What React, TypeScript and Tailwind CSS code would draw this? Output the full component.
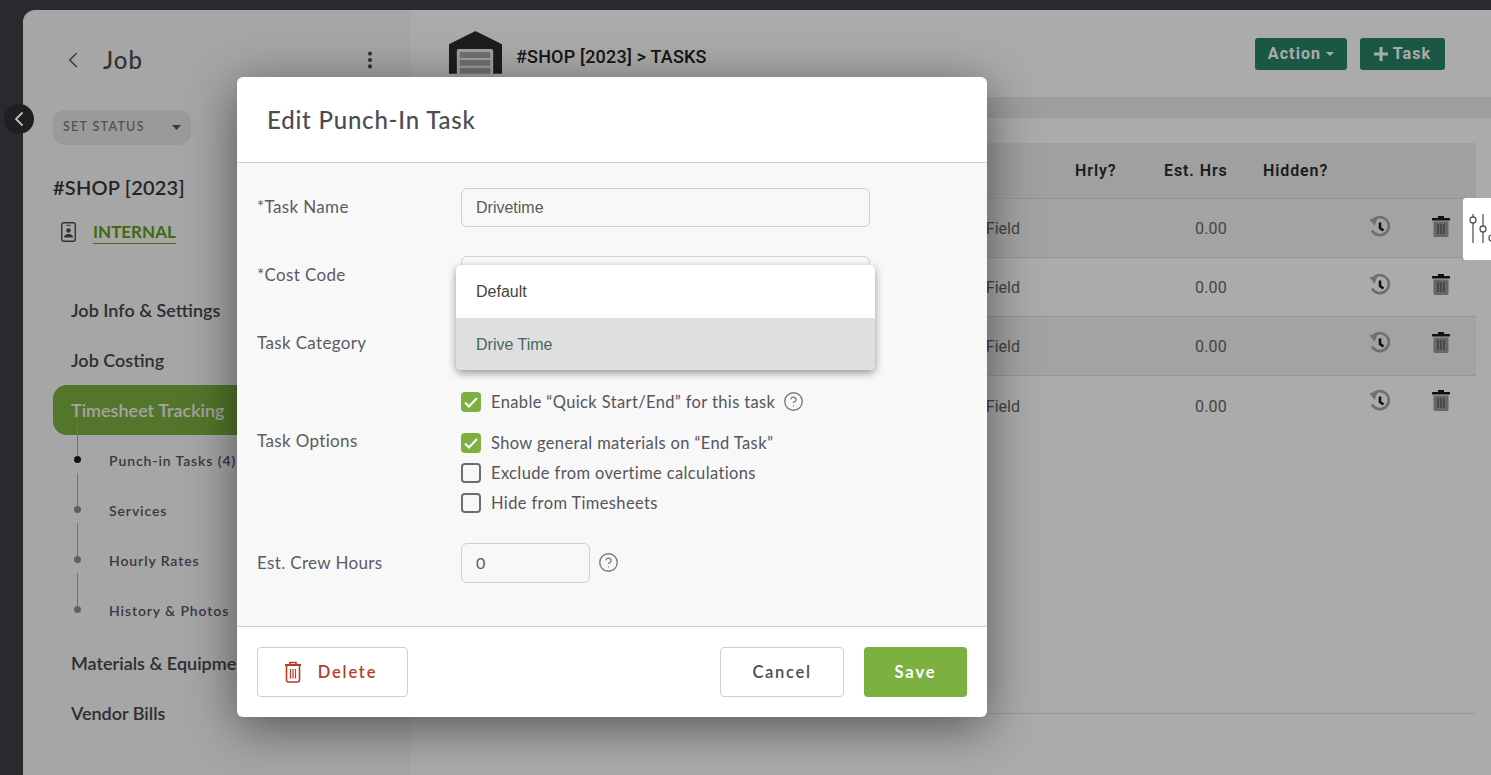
import React from "react";
import { ChevronLeft, EllipsisVertical, CircleHelp } from "lucide-react";

const Sans = "font-['Lato','Open_Sans',sans-serif]";
const Rob = "font-['Roboto',sans-serif]";
const Lib = "font-['Liberation_Sans',sans-serif]";

function HistoryIcon() {
  return (
    <svg width="24" height="24" viewBox="0 0 24 24" fill="none">
      <path d="M4.200 6.400A9 9 0 1 1 4 15.500" stroke="#a6a6a6" strokeWidth="2.600" />
      <path d="M1.500 4 L9.500 3.500 L6.500 11 Z" fill="#a6a6a6" />
      <path d="M12 7.500 V13 L15.500 15.500" stroke="#1c1c1c" strokeWidth="2.600" />
    </svg>
  );
}

function TrashIcon() {
  return (
    <svg width="20" height="22" viewBox="0 0 20 22">
      <rect x="7" y="0" width="6" height="2" fill="#1a1a1a" />
      <rect x="1" y="2" width="18" height="2.400" rx="0.500" fill="#1a1a1a" />
      <path d="M2.500 5.500 H17.500 V19.500 A1.500 1.500 0 0 1 16 21 H4 A1.500 1.500 0 0 1 2.500 19.500 Z" fill="#9a9a9a" />
      <path d="M7 8 V18 M10 8 V18 M13 8 V18" stroke="#444" strokeWidth="1" />
    </svg>
  );
}

function DeleteTrash() {
  return (
    <svg width="18" height="22" viewBox="0 0 18 22" fill="none" stroke="#b93a26" strokeWidth="1.600">
      <path d="M6 3 V1.500 H12 V3" />
      <path d="M1 4 H17" strokeWidth="2" />
      <path d="M2.500 4 V19 A2 2 0 0 0 4.500 21 H13.500 A2 2 0 0 0 15.500 19 V4" />
      <path d="M6.500 8 V17.500 M9 8 V17.500 M11.500 8 V17.500" strokeWidth="1.200" />
    </svg>
  );
}

function Garage() {
  return (
    <svg width="55" height="50" viewBox="0 0 56 50" className="shrink-0">
      <path d="M1 14 L27 1 Q28 0.500 29 1 L55 14 V44 H1 Z" fill="#2c2c2c" />
      <rect x="9" y="19" width="37" height="31" rx="2" fill="#f2f2f2" />
      <rect x="12" y="22" width="31" height="6" fill="#a9a9a9" />
      <rect x="12" y="30" width="31" height="6" fill="#a9a9a9" />
      <rect x="12" y="38" width="31" height="6" fill="#a9a9a9" />
    </svg>
  );
}

function Badge() {
  return (
    <svg width="15" height="20" viewBox="0 0 15 20" fill="none" className="shrink-0">
      <rect x="0.700" y="0.700" width="13.600" height="18.600" rx="2" stroke="#4b4b50" strokeWidth="1.400" />
      <rect x="5.500" y="2.800" width="4" height="1" fill="#4b4b50" />
      <circle cx="7.500" cy="8.500" r="2.200" fill="#4b4b50" />
      <path d="M3 15.500 Q3 12 7.500 12 Q12 12 12 15.500 Z" fill="#4b4b50" />
    </svg>
  );
}

function Sliders() {
  return (
    <svg width="28" height="34" viewBox="0 0 28 34" fill="none" stroke="#555" strokeWidth="1.300" className="shrink-0">
      <path d="M10 2 V31 M20 2 V31 M29 5 V31" />
      <circle cx="10" cy="8" r="3" fill="#fff" />
      <circle cx="20" cy="17" r="3" fill="#fff" />
      <circle cx="29" cy="26" r="3" fill="#fff" />
    </svg>
  );
}

function NavItem({ label }: { label: string }) {
  return (
    <div className="flex h-[50px] items-center pl-[18px] text-[18px] font-semibold whitespace-nowrap text-[#45454d]">
      {label}
    </div>
  );
}

function SubItem({ label, active }: { label: string; active?: boolean }) {
  return (
    <div className="flex h-[50px] items-center">
      <div className="ml-[20px] flex h-full w-[9px] shrink-0 flex-col items-center">
        <div className="-mt-[12px] h-[33px] w-px shrink-0 bg-[#a8a8a8]" />
        <div className={`h-[7px] w-[7px] shrink-0 rounded-full ${active ? "bg-[#1a1a1a]" : "bg-[#8f8f8f]"}`} />
      </div>
      <span className="ml-[27px] text-[14px] font-semibold tracking-[0.9px] whitespace-nowrap text-[#55555c]">{label}</span>
    </div>
  );
}

function Row({ shaded, last, iconShift }: { shaded?: boolean; last?: boolean; iconShift: string }) {
  return (
    <div className={`flex h-[59px] items-center pt-[2px] ${last ? "" : "border-b border-[#dedede]"} ${shaded ? "bg-[#f3f3f3]" : "bg-white"}`}>
      <div className={`flex-1 text-right text-[16px] text-[#666] ${Rob}`}>Field</div>
      <div className="w-[144px]" />
      <div className={`w-[63px] text-right text-[16px] tracking-[0.2px] text-[#666] ${Rob}`}>0.00</div>
      <div className={`flex w-[179px] justify-end pr-[14px] ${iconShift}`}><HistoryIcon /></div>
      <div className={`flex w-[70px] justify-center ${iconShift}`}><TrashIcon /></div>
    </div>
  );
}

function Check({ checked, label, help }: { checked?: boolean; label: string; help?: boolean }) {
  return (
    <div className="flex h-[30px] items-center">
      {checked ? (
        <div className="flex h-[20px] w-[20px] items-center justify-center rounded-[4px] bg-[#7cb041]">
          <svg width="14" height="11" viewBox="0 0 14 11" fill="none" stroke="#fff" strokeWidth="2">
            <path d="M1 5.500 L5 9.500 L13 1" />
          </svg>
        </div>
      ) : (
        <div className="h-[20px] w-[20px] rounded-[4px] border-2 border-[#6d6d76]" />
      )}
      <span className="ml-[10px] text-[16.500px] tracking-[0.37px] whitespace-nowrap text-[#55555c]">{label}</span>
      {help && <CircleHelp size={21} strokeWidth={1.500} className="-mt-[2px] ml-[8px] text-[#77777c]" />}
    </div>
  );
}

function Field({ label, children, h = "h-[68px]" }: { label: string; children?: React.ReactNode; h?: string }) {
  return (
    <div className={`flex ${h}`}>
      <div className="w-[204px] pt-[7px] text-[17px] leading-[24px] tracking-[0.35px] text-[#5b5b62]">{label}</div>
      <div className="flex-1">{children}</div>
    </div>
  );
}

const inputCls = `h-[39px] rounded-[6px] border border-[#cfcfcf] bg-[#f8f8f8] pl-[14px] flex items-center text-[16px] text-[#5a5a60]`;

export default function App() {
  return (
    <div className={`relative h-[775px] w-[1491px] overflow-hidden bg-[#3f3f45] pt-[10px] pl-[23px] ${Sans}`}>
      <div className="flex h-[765px] overflow-hidden rounded-tl-[12px]">
        {/* sidebar */}
        <aside className="w-[388px] shrink-0 bg-[#f8f8f8] pt-[30px]">
          <div className="flex h-[40px] items-center pl-[37px]">
            <ChevronLeft size={26} strokeWidth={1.500} className="text-[#5c5c62]" />
            <span className="ml-[17px] text-[24px] font-medium tracking-[1px] text-[#4a4a52]">Job</span>
            <EllipsisVertical size={22} strokeWidth={2.500} className="ml-[216px] text-[#4a4a52]" />
          </div>
          <div className="mt-[30px] ml-[30px] flex h-[35px] w-[138px] items-center rounded-[12px] bg-[#e6e6e6] pl-[10px]">
            <span className="text-[12.500px] font-semibold tracking-[1.300px] text-[#7c7c82]">SET STATUS</span>
            <svg width="9" height="5" viewBox="0 0 9 5" className="ml-[27px]"><path d="M0 0 H9 L4.500 5 Z" fill="#55555c" /></svg>
          </div>
          <div className="mt-[29px] ml-[30px] text-[20px] leading-[26px] font-semibold tracking-[0.2px] text-[#37373d]">#SHOP [2023]</div>
          <div className="mt-[19px] ml-[38px] flex h-[26px] items-center">
            <Badge />
            <span className="ml-[17px] border-b border-[#5f9e1a] text-[17px] leading-[22px] font-bold text-[#5f9e1a]">INTERNAL</span>
          </div>
          <div className="mt-[40px] ml-[30px]">
            <NavItem label="Job Info & Settings" />
            <NavItem label="Job Costing" />
            <div className="flex h-[50px] items-center rounded-l-[14px] bg-[#7cb041] pl-[18px] text-[18px] font-semibold text-[#f4f4f4]">Timesheet Tracking</div>
            <SubItem active label="Punch-in Tasks (4)" />
            <SubItem label="Services" />
            <SubItem label="Hourly Rates" />
            <SubItem label="History & Photos" />
            <div className="h-[3px]" />
            <NavItem label="Materials & Equipment" />
            <NavItem label="Vendor Bills" />
          </div>
        </aside>

        {/* main */}
        <main className={`flex-1 bg-white ${Rob}`}>
          <div className="flex h-[87px] items-start justify-between pr-[46px]">
            <div className="flex items-center pt-[20px] pl-[37px]">
              <Garage />
              <span className="mt-[3px] ml-[13px] text-[18px] font-medium tracking-[0.2px] text-[#222]">#SHOP [2023] &gt; TASKS</span>
            </div>
            <div className="flex gap-[13px] pt-[28px]">
              <div className="flex h-[32px] w-[92px] items-center justify-center gap-[5px] rounded-[3px] bg-[#278268] text-[16px] font-bold tracking-[1.100px] text-white">
                Action
                <svg width="8" height="4" viewBox="0 0 8 4"><path d="M0 0 H8 L4 4 Z" fill="#fff" /></svg>
              </div>
              <div className="flex h-[32px] w-[85px] items-center justify-center gap-[5px] rounded-[3px] bg-[#278268] text-[16px] font-bold tracking-[1.100px] text-white">
                <svg width="14" height="14" viewBox="0 0 14 14"><path d="M7 0 V14 M0 7 H14" stroke="#fff" strokeWidth="3" /></svg>
                Task
              </div>
            </div>
          </div>
          <div className="h-[21px] bg-[#ececec]" />
          <div className="mt-[25px] ml-[30px] flex h-[571px] w-[1035px] flex-col border-b border-[#e4e4e4]">
            <div className="flex h-[56px] items-center border-b border-[#e0e0e6] bg-[#efefef] text-[16px] font-semibold tracking-[0.9px] text-[#2a2a2a]">
              <div className="flex-1" />
              <div className="w-[89px]">Hrly?</div>
              <div className="w-[99px]">Est. Hrs</div>
              <div className="w-[213px]">Hidden?</div>
            </div>
            <Row shaded iconShift="-mt-[5px]" />
            <Row iconShift="-mt-[7px]" />
            <Row shaded iconShift="-mt-[9px]" />
            <Row last iconShift="-mt-[11px]" />
          </div>
        </main>
      </div>

      {/* overlay */}
      <div className="absolute inset-0 bg-black/33" />

      {/* collapse button */}
      <div className="absolute top-[104px] left-[4px] flex h-[30px] w-[30px] items-center justify-center rounded-full bg-[#1f1f22]">
        <ChevronLeft size={24} strokeWidth={1.800} className="text-[#bdbdbd]" />
      </div>

      {/* side tab */}
      <div className="absolute top-[198px] left-[1463px] flex h-[62px] w-[28px] items-center overflow-hidden rounded-l-[3px] bg-white">
        <Sliders />
      </div>

      {/* modal */}
      <div className="absolute top-[77px] left-[237px] flex h-[640px] w-[750px] flex-col rounded-[6px] bg-white shadow-[0_10px_50px_rgba(0,0,0,0.5)]">
        <div className="flex h-[86px] shrink-0 items-center border-b border-[#cfcfcf] pl-[30px]">
          <span className="text-[24px] font-medium tracking-[0.8px] text-[#4c4c54]">Edit Punch-In Task</span>
        </div>
        <div className="relative h-[464px] shrink-0 border-b border-[#cfcfcf] bg-[#f8f8f8] px-[20px] pt-[25px]">
          <Field label="*Task Name"><div className={`${inputCls} w-[409px] pt-[1px] ${Lib}`}>Drivetime</div></Field>
          <Field label="*Cost Code"><div className={`${inputCls} w-[409px]`} /></Field>
          <Field label="Task Category"><div className={`${inputCls} w-[409px]`} /></Field>
          <div className="flex h-[149px]">
            <div className="w-[204px] pt-[37px] text-[17px] leading-[24px] tracking-[0.35px] text-[#5b5b62]">Task Options</div>
            <div className="-mt-[5px] flex-1">
              <Check checked label="Enable “Quick Start/End” for this task" help />
              <div className="h-[11px]" />
              <Check checked label="Show general materials on “End Task”" />
              <Check label="Exclude from overtime calculations" />
              <Check label="Hide from Timesheets" />
            </div>
          </div>
          <div className="mt-[2px] flex h-[40px] items-center">
            <div className="w-[204px] text-[17px] tracking-[0.35px] text-[#5b5b62]">Est. Crew Hours</div>
            <div className={`${inputCls} h-[40px] w-[129px] ${Sans}`}>0</div>
            <CircleHelp size={21} strokeWidth={1.500} className="-mt-[2px] ml-[8px] text-[#77777c]" />
          </div>

          <div className={`absolute top-[102px] left-[219px] flex w-[419px] flex-col overflow-hidden rounded-[5px] bg-white text-[16px] shadow-[0_3px_8px_rgba(0,0,0,0.4)] ${Lib}`}>
            <div className="flex h-[53px] items-center pl-[20px] text-[#444]">Default</div>
            <div className="flex h-[52px] items-center bg-[#dfdfdf] pt-[1px] pl-[20px] text-[#46695b]">Drive Time</div>
          </div>
        </div>
        <div className="flex flex-1 items-center justify-between px-[20px]">
          <div className="flex h-[50px] w-[151px] items-center justify-center gap-[16px] rounded-[4px] border border-[#cfcfcf] pr-[4px] text-[16.500px] font-semibold tracking-[1.800px] text-[#b93a26]">
            <DeleteTrash />
            Delete
          </div>
          <div className="flex gap-[20px]">
            <div className="flex h-[50px] w-[124px] items-center justify-center rounded-[4px] border border-[#cfcfcf] text-[16.500px] font-semibold tracking-[1.700px] text-[#4c4c54]">Cancel</div>
            <div className="flex h-[50px] w-[103px] items-center justify-center rounded-[4px] bg-[#7cb041] text-[16.500px] font-bold tracking-[1.900px] text-white">Save</div>
          </div>
        </div>
      </div>
    </div>
  );
}
